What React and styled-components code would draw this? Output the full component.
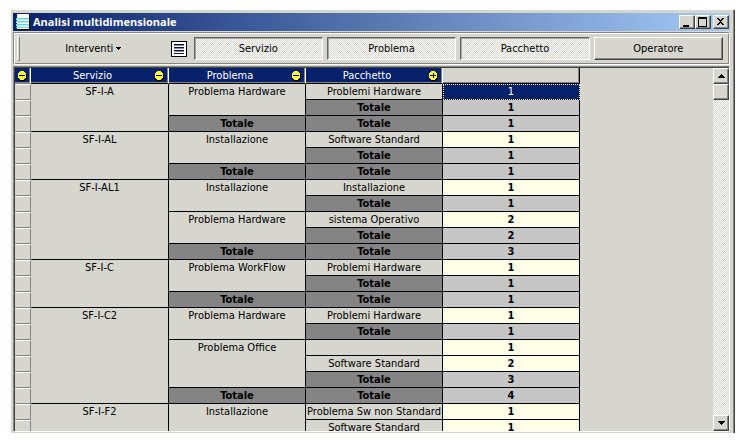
import React, { useState } from "react";
import styled, { createGlobalStyle, css } from "styled-components";

const face = "#d6d6ce";
const navy = "#08216b";

const dither = css`
  background: repeating-conic-gradient(#ffffff 0% 25%, ${face} 0% 50%) 0 0 / 2px
    2px;
`;

const raised = css`
  background: ${face};
  border: 1px solid;
  border-color: #ffffff #424242 #424242 #ffffff;
  box-shadow: inset -1px -1px 0 #848484;
`;

const GlobalStyle = createGlobalStyle`
  *, *::before, *::after {
    box-sizing: border-box;
  }

  body {
    margin: 0;
    background: white;
  }

  body, button, table {
    font-family: "DejaVu Sans Condensed", "DejaVu Sans", sans-serif;
    font-size: 11px;
    line-height: 14px;
    color: black;
  }

  button {
    padding: 0;
    border: 0;
    background: none;
  }
`;

const Page = styled.div`
  height: 100vh;
  padding: 10px 10px 10px 11px;
`;

const Window = styled.main`
  display: flex;
  flex-direction: column;
  height: 100%;
  background: ${face};
  padding: 3px 4px 1px 2px;
  border-right: 1px solid #424242;
  box-shadow: inset -1px 0 0 #848484;
`;

const TitleBar = styled.header`
  display: flex;
  align-items: center;
  flex: none;
  height: 18px;
  padding: 0 1px 0 3px;
  background: linear-gradient(90deg, ${navy} 0%, #a5cbf7 100%);
`;

const Title = styled.h1`
  flex: 1;
  margin: 0 0 0 3px;
  font-family: "Open Sans", "Noto Sans", sans-serif;
  font-size: 11px;
  line-height: 14px;
  font-weight: bold;
  color: white;
`;

const WindowButton = styled.button`
  ${raised}
  display: flex;
  width: 16px;
  height: 14px;
  margin-left: ${(props) => (props.$apart ? "2px" : "0")};
`;

const Toolbar = styled.div`
  display: flex;
  align-items: center;
  flex: none;
  height: 33px;
  margin-top: 1px;
  padding: 0 6px 0 3px;
  border: 1px solid #848484;
  border-right-color: #ffffff;
  border-bottom-color: #ffffff;
  box-shadow: inset 1px 1px 0 #ffffff, inset -1px -1px 0 #848484;
`;

const Grip = styled.div`
  width: 3px;
  height: 25px;
  border: 1px solid;
  border-color: #ffffff #848484 #848484 #ffffff;
`;

const MenuButton = styled.button`
  display: flex;
  align-items: center;
  justify-content: center;
  gap: 3px;
  flex: 1;
  height: 24px;
`;

const ListButton = styled.button`
  display: flex;
  margin: 0 7px 0 4px;
`;

const Dimensions = styled.div`
  display: grid;
  grid-template-columns: repeat(4, 1fr);
  gap: 4px;
  flex: 0 0 75%;
`;

const DimensionButton = styled.button`
  height: 23px;
  ${(props) =>
    props.$pressed
      ? css`
          ${dither}
          border: 1px solid;
          border-color: #636363 #ffffff #ffffff #636363;
          box-shadow: inset 1px 1px 0 #a5a5a5;
        `
      : raised}
`;

const Viewer = styled.section`
  display: flex;
  flex: 1;
  min-height: 0;
  margin-top: 1px;
  border: 1px solid;
  border-color: #848484 #ffffff #ffffff #848484;
`;

const Sheet = styled.div`
  flex: 1;
  min-width: 0;
  overflow: hidden;
  border-top: 1px solid #424242;
  border-left: 1px solid #424242;
`;

const Grid = styled.table`
  table-layout: fixed;
  width: 565px;
  border-collapse: separate;
  border-spacing: 0;

  tr {
    height: 16px;
  }

  td,
  th {
    height: 16px;
    padding: 1px 0 0;
    text-align: center;
    vertical-align: top;
    font-weight: normal;
    white-space: nowrap;
  }
`;

const Column = styled.col`
  width: ${(props) => props.$width}px;
`;

const HeadCell = styled.th`
  background: ${(props) => (props.$empty ? face : navy)};
  color: white;
  border-bottom: 1px solid ${(props) => (props.$corner ? "#848484" : "black")};
  border-right: 1px solid ${(props) => (props.$empty ? "black" : "white")};
  box-shadow: inset -1px -1px 0 #848484;
`;

const HeadContent = styled.div`
  display: flex;
  align-items: center;
  justify-content: center;
  height: 14px;
  padding-right: ${(props) => (props.$corner ? "0" : "3px")};
`;

const HeadLabel = styled.span`
  flex: 1;
`;

const ToggleButton = styled.button`
  display: flex;
`;

const RowMarker = styled.td`
  border: 1px solid;
  border-color: #ffffff #848484 #848484 ${face};
`;

const MemberCell = styled.th`
  border-right: 1px solid black;
  border-bottom: 1px solid black;
`;

const TotalCell = styled.th`
  && {
    font-weight: bold;
  }
  background: #848484;
  border-right: 1px solid black;
  border-bottom: 1px solid black;
`;

const ValueCell = styled.td`
  && {
    font-weight: ${(props) => (props.$selected ? "normal" : "bold")};
  }
  color: ${(props) => (props.$selected ? "white" : "black")};
  background: ${(props) =>
    props.$selected ? navy : props.$total ? "#c6c6c6" : "#ffffe7"};
  border-right: 1px solid black;
  border-bottom: 1px solid black;
  ${(props) =>
    props.$selected &&
    css`
      outline: 1px dotted white;
      outline-offset: -1px;
    `}
`;

const ScrollBar = styled.div`
  ${dither}
  display: flex;
  flex-direction: column;
  justify-content: space-between;
  flex: none;
  width: 16px;
  border-top: 1px solid #424242;
`;

const ScrollButton = styled.button`
  ${raised}
  display: flex;
  align-items: center;
  justify-content: center;
  width: 16px;
  height: 16px;
`;

const Thumb = styled.div`
  ${raised}
  height: 16px;
`;

const dimensions = ["Servizio", "Problema", "Pacchetto", "Operatore"];

const columns = [
  { name: "Servizio", open: true },
  { name: "Problema", open: true },
  { name: "Pacchetto", open: false },
];

const TOTAL = "Totale";

// Each row lists only the cells that start on it; the number is the row span.
const rows = [
  {
    service: ["SF-I-A", 3],
    problem: ["Problema Hardware", 2],
    pack: "Problemi Hardware",
    value: 1,
  },
  { pack: TOTAL, value: 1 },
  { problem: [TOTAL, 1], pack: TOTAL, value: 1 },
  {
    service: ["SF-I-AL", 3],
    problem: ["Installazione", 2],
    pack: "Software Standard",
    value: 1,
  },
  { pack: TOTAL, value: 1 },
  { problem: [TOTAL, 1], pack: TOTAL, value: 1 },
  {
    service: ["SF-I-AL1", 5],
    problem: ["Installazione", 2],
    pack: "Installazione",
    value: 1,
  },
  { pack: TOTAL, value: 1 },
  { problem: ["Problema Hardware", 2], pack: "sistema Operativo", value: 2 },
  { pack: TOTAL, value: 2 },
  { problem: [TOTAL, 1], pack: TOTAL, value: 3 },
  {
    service: ["SF-I-C", 3],
    problem: ["Problema WorkFlow", 2],
    pack: "Problemi Hardware",
    value: 1,
  },
  { pack: TOTAL, value: 1 },
  { problem: [TOTAL, 1], pack: TOTAL, value: 1 },
  {
    service: ["SF-I-C2", 6],
    problem: ["Problema Hardware", 2],
    pack: "Problemi Hardware",
    value: 1,
  },
  { pack: TOTAL, value: 1 },
  { problem: ["Problema Office", 3], pack: "", value: 1 },
  { pack: "Software Standard", value: 2 },
  { pack: TOTAL, value: 3 },
  { problem: [TOTAL, 1], pack: TOTAL, value: 4 },
  {
    service: ["SF-I-F2", 2],
    problem: ["Installazione", 2],
    pack: "Problema Sw non Standard",
    value: 1,
  },
  { pack: "Software Standard", value: 1 },
];

const AppIcon = () => (
  <svg width="14" height="16" shapeRendering="crispEdges" aria-hidden="true">
    <path d="M1 1h13v15h-13z" fill="#000" />
    <path d="M1 0h12v15h-12z" fill="#fff" />
    <path d="M0 4h13v1h-13zM0 7h13v1h-13zM0 10h13v1h-13zM0 13h13v1h-13z" fill="#63d6de" />
    <path d="M0 5h13v1h-13zM0 8h13v1h-13zM0 11h13v1h-13z" fill="#a5eff7" />
  </svg>
);

const ListIcon = () => (
  <svg width="16" height="16" shapeRendering="crispEdges" aria-hidden="true">
    <path d="M0 0h16v16h-16z" fill="#000" />
    <path d="M1 1h14v14h-14z" fill="#fff" />
    <path d="M3 3h10v1h-10zM3 6h10v1h-10zM3 9h10v1h-10zM3 12h10v1h-10z" fill="#101031" />
    <path d="M3 4h10v1h-10zM3 7h10v1h-10zM3 10h10v1h-10z" fill="#8484b5" />
  </svg>
);

const ToggleIcon = ({ open }) => (
  <svg width="11" height="11" shapeRendering="crispEdges" aria-hidden="true">
    <path
      d="M3 1h5v1h1v1h1v5h-1v1h-1v1h-5v-1h-1v-1h-1v-5h1v-1h1z"
      fill="#000"
    />
    <path
      d="M3 0h4v1h1v1h1v5h-1v1h-1v1h-4v-1h-1v-1h-1v-5h1v-1h1z"
      fill="#ffff31"
    />
    <path d="M2 4h6v1h-6z" fill="#000" />
    {!open && <path d="M5 2h1v5h-1z" fill="#000" />}
  </svg>
);

const Arrow = ({ up }) => (
  <svg width="7" height="4" shapeRendering="crispEdges" aria-hidden="true">
    <path
      d={
        up
          ? "M3 0h1v1h1v1h1v1h1v1h-7v-1h1v-1h1v-1h1z"
          : "M0 0h7v1h-1v1h-1v1h-1v1h-1v-1h-1v-1h-1v-1h-1z"
      }
    />
  </svg>
);

const Caret = () => (
  <svg width="5" height="3" shapeRendering="crispEdges" aria-hidden="true">
    <path d="M0 0h5v1h-1v1h-1v1h-1v-1h-1v-1h-1z" />
  </svg>
);

const windowIcons = {
  "Riduci a icona": "M3 9h6v2h-6z",
  Ingrandisci: "M2 1h9v10h-9zM3 3v7h7v-7z",
  Chiudi:
    "M3 2h2v1h1v1h1v-1h1v-1h2v1h-1v1h-1v1h-1v1h1v1h1v1h1v1h-2v-1h-1v-1h-1v1h-1v1h-2v-1h1v-1h1v-1h1v-1h-1v-1h-1v-1h-1z",
};

const Member = ({ text, span = 1 }) =>
  text === TOTAL ? (
    <TotalCell scope="row">{text}</TotalCell>
  ) : (
    <MemberCell scope="row" rowSpan={span}>
      {text}
    </MemberCell>
  );

const App = () => {
  const [active, setActive] = useState(["Servizio", "Problema", "Pacchetto"]);
  const [selected, setSelected] = useState(0);

  const toggle = (name) =>
    setActive(
      active.includes(name)
        ? active.filter((d) => d !== name)
        : [...active, name]
    );

  return (
    <Page>
      <GlobalStyle />
      <Window>
        <TitleBar>
          <AppIcon />
          <Title>Analisi multidimensionale</Title>
          {Object.entries(windowIcons).map(([label, d]) => (
            <WindowButton
              key={label}
              aria-label={label}
              $apart={label === "Chiudi"}
            >
              <svg width="13" height="12" shapeRendering="crispEdges">
                <path fillRule="evenodd" d={d} />
              </svg>
            </WindowButton>
          ))}
        </TitleBar>
        <Toolbar>
          <Grip />
          <MenuButton aria-haspopup="menu">
            Interventi
            <Caret />
          </MenuButton>
          <ListButton aria-label="Elenco">
            <ListIcon />
          </ListButton>
          <Dimensions>
            {dimensions.map((name) => (
              <DimensionButton
                key={name}
                $pressed={active.includes(name)}
                aria-pressed={active.includes(name)}
                onClick={() => toggle(name)}
              >
                {name}
              </DimensionButton>
            ))}
          </Dimensions>
        </Toolbar>
        <Viewer>
          <Sheet>
            <Grid>
              <colgroup>
                <Column $width={16} />
                <Column $width={138} />
                <Column $width={137} />
                <Column $width={137} />
                <Column $width={137} />
              </colgroup>
              <thead>
                <tr>
                  <HeadCell $corner>
                    <HeadContent $corner>
                      <ToggleButton aria-label="Comprimi tutto">
                        <ToggleIcon open />
                      </ToggleButton>
                    </HeadContent>
                  </HeadCell>
                  {columns.map(({ name, open }) => (
                    <HeadCell key={name} scope="col">
                      <HeadContent>
                        <HeadLabel>{name}</HeadLabel>
                        <ToggleButton
                          aria-label={`${open ? "Comprimi" : "Espandi"} ${name}`}
                        >
                          <ToggleIcon open={open} />
                        </ToggleButton>
                      </HeadContent>
                    </HeadCell>
                  ))}
                  <HeadCell $empty />
                </tr>
              </thead>
              <tbody>
                {rows.map(({ service, problem, pack, value }, i) => (
                  <tr key={i}>
                    <RowMarker />
                    {service && <Member text={service[0]} span={service[1]} />}
                    {problem && <Member text={problem[0]} span={problem[1]} />}
                    <Member text={pack} />
                    <ValueCell
                      $total={pack === TOTAL}
                      $selected={selected === i}
                      onClick={() => setSelected(i)}
                    >
                      {value}
                    </ValueCell>
                  </tr>
                ))}
              </tbody>
            </Grid>
          </Sheet>
          <ScrollBar>
            <div>
              <ScrollButton aria-label="Scorri in alto">
                <Arrow up />
              </ScrollButton>
              <Thumb />
            </div>
            <ScrollButton aria-label="Scorri in basso">
              <Arrow />
            </ScrollButton>
          </ScrollBar>
        </Viewer>
      </Window>
    </Page>
  );
};

export default App;
